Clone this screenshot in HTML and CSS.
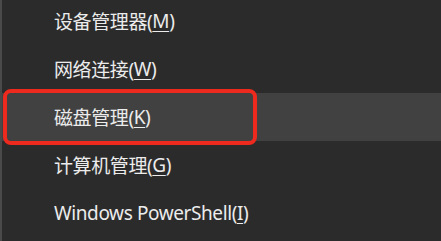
FILE: index.html
```html
<!DOCTYPE html>
<html lang="zh-CN">
<head>
<meta charset="utf-8">
<link rel="stylesheet" href="styles.css">
</head>
<body>
<ul class="menu">
  <li class="item">设备管理器(<u>M</u>)</li>
  <li class="item">网络连接(<u>W</u>)</li>
  <li class="item item-active">磁盘管理(<u>K</u>)</li>
  <li class="item">计算机管理(<u>G</u>)</li>
  <li class="item">Windows PowerShell(<u>I</u>)</li>
</ul>
</body>
</html>
```
FILE: styles.css
```css
html, body {
  margin: 0;
  padding: 0;
  height: 100%;
  overflow: hidden;
}
body {
  background: #2b2b2b;
  border-left: 2px solid #4a4a4a;
  box-sizing: border-box;
  font-family: "Noto Sans", "Noto Sans CJK SC", sans-serif;
  color: #ececec;
}
.menu {
  list-style: none;
  margin: -3px 0 0 0;
  padding: 0;
  display: flex;
  flex-direction: column;
}
.item {
  height: 48px;
  display: flex;
  align-items: center;
  padding-left: 52px;
  font-size: 19px;
  letter-spacing: -0.4px;
  position: relative;
}
.item u {
  text-decoration-thickness: 1px;
  text-underline-offset: 3px;
}
.item-active {
  background: #414141;
}
.item-active::after {
  content: "";
  position: absolute;
  left: 1px;
  top: -4px;
  bottom: -4px;
  width: 254px;
  border: 4px solid #ee2a1e;
  border-radius: 8px;
  box-sizing: border-box;
}
```
